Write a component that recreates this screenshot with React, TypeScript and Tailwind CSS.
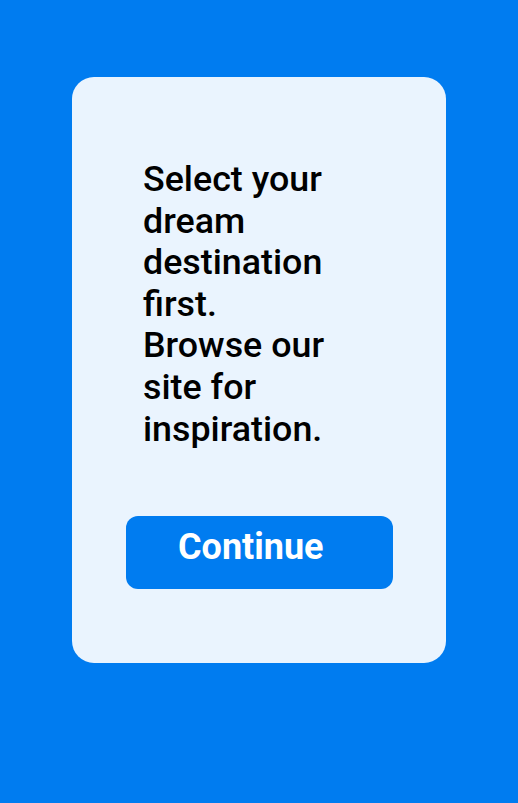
export default function App() {
  return (
    <div className="min-h-screen w-full bg-[#007cf0] pt-[77px] font-['Roboto',sans-serif]">
      <div className="ml-[72px] w-[374px] h-[586px] rounded-[22px] bg-[#eaf4fe] pt-[82px]">
        <div className="ml-[71px] w-[198px] text-[35.8px] leading-[41.6px] font-medium text-black">
          <p>Select your dream destination first.</p>
          <p>Browse our site for inspiration.</p>
        </div>
        <button className="mt-[66px] ml-[54px] flex h-[73px] w-[267px] items-start rounded-[12px] bg-[#007cf0] pl-[52px] pt-[10px] text-[36px] leading-[42px] font-bold text-white">
          Continue
        </button>
      </div>
    </div>
  )
}
